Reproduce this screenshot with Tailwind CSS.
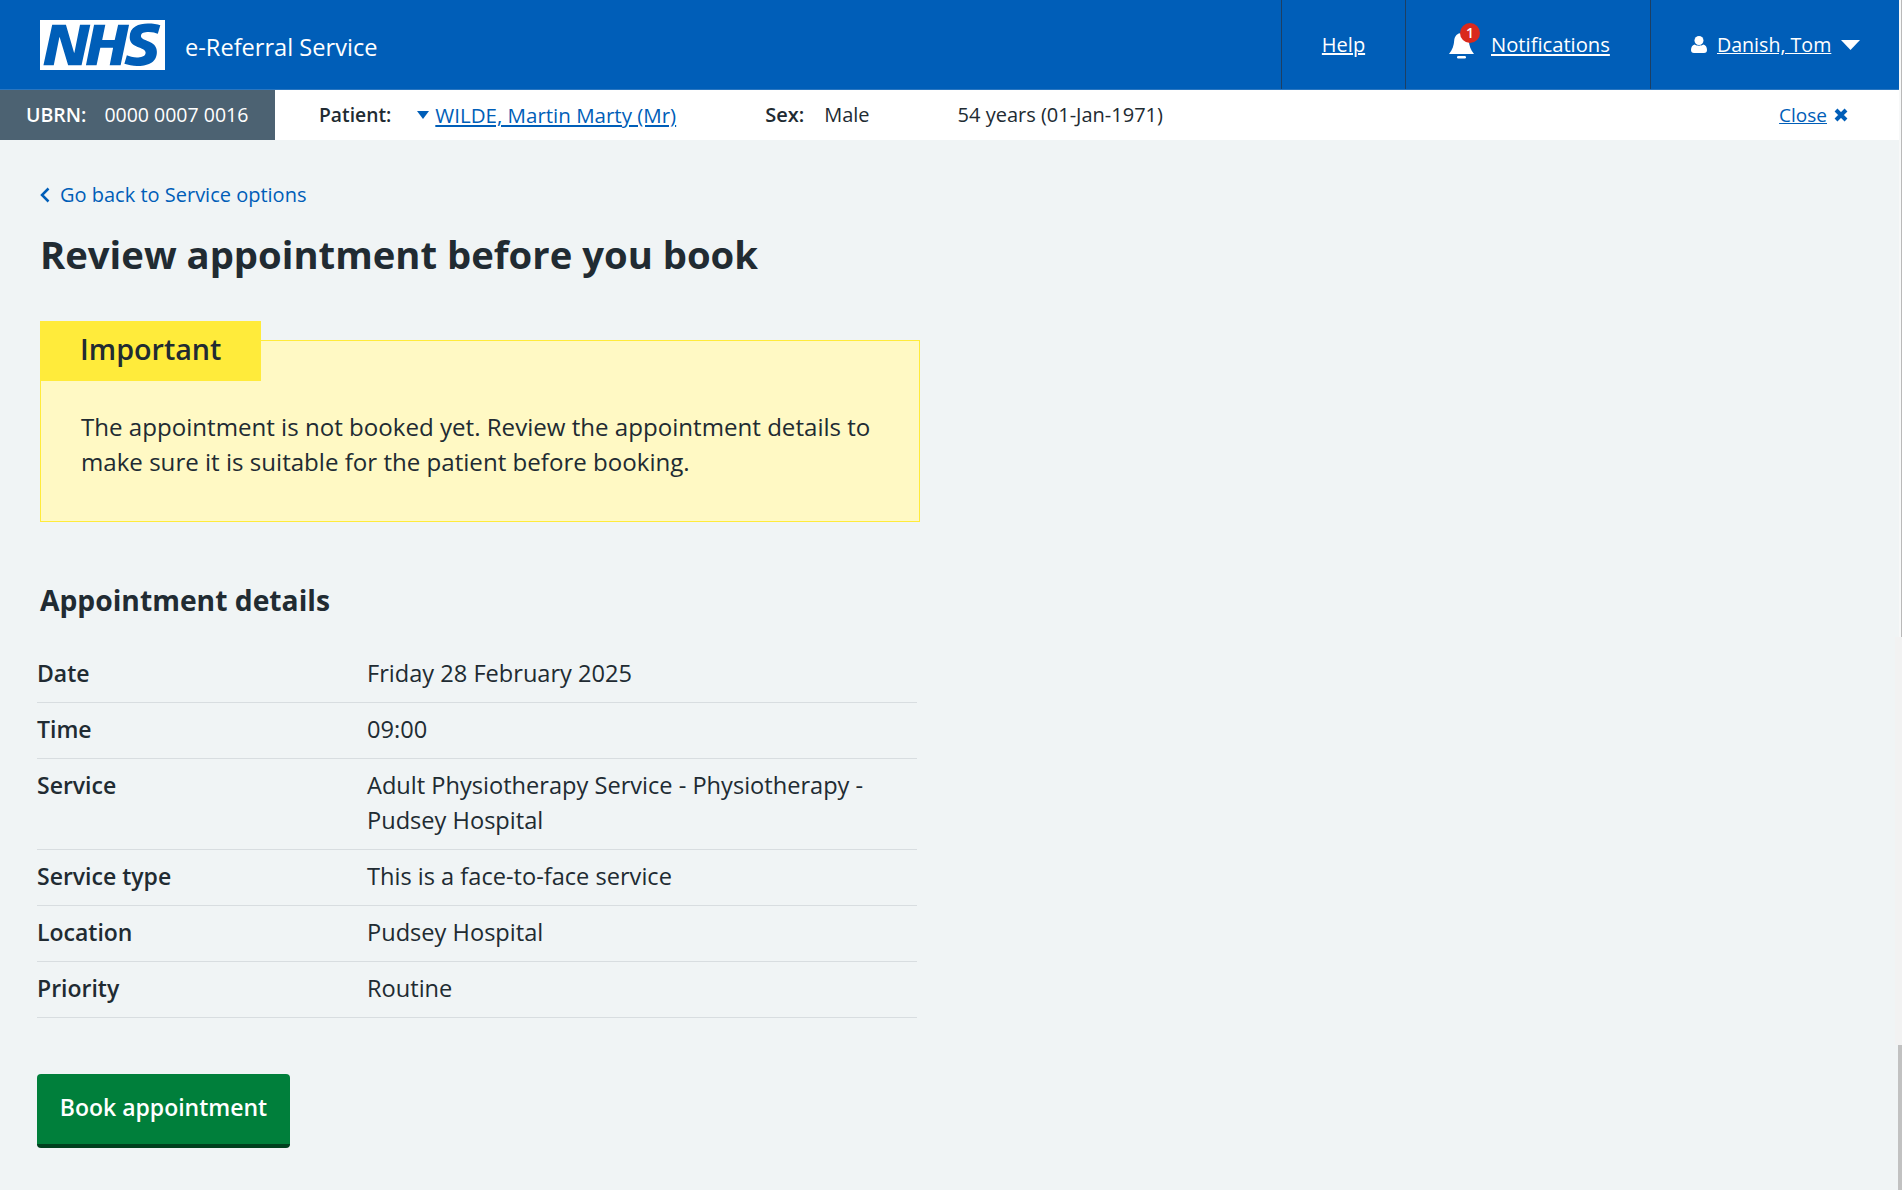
<!DOCTYPE html>
<html lang="en">
<head>
    <meta charset="UTF-8">
    <title>Review appointment before you book</title>
    <script src="https://cdn.jsdelivr.net/npm/@tailwindcss/browser@4"></script>
</head>
<body class="bg-[#f0f4f5] text-[#212b32] font-['Open_Sans',sans-serif] h-[1190px] overflow-hidden">
    <div class="flex h-[1190px]">
        <div class="flex-1 min-w-0">
            <!-- Top header -->
            <header class="flex h-[90px] bg-[#005eb8] border-b border-b-[#2a76c0] text-white">
                <div class="flex-1 flex items-center pl-10">
                    <svg class="w-[125px] h-[50px]" viewBox="0 0 40 16" aria-label="NHS">
                        <path fill="#fff" d="M0 0h40v16H0z"></path>
                        <path fill="#005eb8" d="M3.9 1.5h4.4l2.6 9h.1l1.8-9h3.3l-2.8 13H9l-2.7-9h-.1l-1.8 9H1.1M17.3 1.5h3.6l-1 4.9h4L25 1.5h3.5l-2.7 13h-3.5l1.1-5.6h-4.1l-1.2 5.6h-3.4M37.7 4.4c-.7-.3-1.6-.6-2.9-.6-1.4 0-2.5.2-2.5 1.3 0 1.8 5.1 1.2 5.1 5.1 0 3.6-3.3 4.5-6.4 4.5-1.3 0-2.9-.3-4-.7l.8-2.7c.7.4 2.1.7 3.2.7s2.8-.2 2.8-1.5c0-2.1-5.1-1.3-5.1-5 0-3.4 2.9-4.4 5.8-4.4 1.6 0 3.1.2 4 .6"></path>
                    </svg>
                    <span class="ml-5 mt-[6px] text-[23.6px]">e-Referral Service</span>
                </div>
                <a class="w-[124px] border-l border-[#1d3f63] flex items-center justify-center text-[20px] underline">Help</a>
                <div class="w-[245px] border-l border-[#1d3f63] flex items-center pl-[43px]">
                    <span class="relative w-[25px] h-7 mr-[17px]">
                        <svg class="w-[25px] h-7" viewBox="0 0 25 28" fill="#fff"><path d="M12.5 2c4 0 7 3 7.3 7.5.3 5 1.7 9 5.2 13.5H0c3.500-4.500 4.900-8.500 5.200-13.500C5.500 5 8.500 2 12.500 2z"></path><rect x="8" y="25" width="9" height="2.5" rx="1.2"></rect></svg>
                        <span class="absolute -top-2 left-[11px] w-5 h-5 rounded-full bg-[#da291c] text-[14px] leading-5 text-center font-semibold">1</span>
                    </span>
                    <a class="text-[20.2px] underline">Notifications</a>
                </div>
                <div class="w-[249px] border-l border-[#1d3f63] flex items-center pl-10">
                    <svg class="w-4 h-[17px] mr-[10px]" viewBox="0 0 16 17" fill="#fff"><circle cx="8" cy="4.5" r="4.5"></circle><path d="M0 14c0-3 1.500-5 3.500-5.500 2.500 1.600 6.500 1.600 9 0 2 .5 3.500 2.500 3.500 5.500 0 2-1 3-3 3H3c-2 0-3-1-3-3z"></path></svg>
                    <a class="text-[19.6px] underline">Danish, Tom</a>
                    <svg class="w-[19px] h-[10px] ml-[10px]" viewBox="0 0 19 10" fill="#fff"><path d="M0 0h19L9.5 10z"></path></svg>
                </div>
            </header>

            <!-- Patient bar -->
            <div class="flex items-center h-[50px] bg-white text-[20px]">
                <div class="w-[275px] h-full bg-[#4c6272] text-white flex items-center pl-[26px] text-[19.5px]">
                    <span class="font-semibold mr-[18px]">UBRN:</span><span>0000 0007 0016</span>
                </div>
                <span class="ml-11 text-[19.3px] font-semibold">Patient:</span>
                <svg class="w-3 h-2 ml-[26px] mr-[6px]" viewBox="0 0 12 8" fill="#005eb8"><path d="M0 0h12L6 8z"></path></svg>
                <a class="text-[20.5px] text-[#005eb8] underline">WILDE, Martin Marty (Mr)</a>
                <span class="ml-[89px] font-semibold">Sex:</span>
                <span class="ml-5">Male</span>
                <span class="ml-[88px]">54 years (01-Jan-1971)</span>
                <a class="ml-auto text-[19px] text-[#005eb8] underline">Close</a>
                <svg class="w-[14px] h-[14px] ml-[7px] mr-[51px]" viewBox="0 0 14 14" fill="none" stroke="#005eb8" stroke-width="4"><path d="M2 2l10 10M12 2L2 12"></path></svg>
            </div>

            <!-- Main content -->
            <main class="pl-10">
                <a class="flex items-center mt-[41px] text-[20px] leading-7 text-[#005eb8]">
                    <svg class="w-[10px] h-4 mr-[10px]" viewBox="0 0 10 16" fill="none" stroke="#005eb8" stroke-width="2.5"><path d="M8.5 1.5L2 8l6.5 6.5"></path></svg>
                    Go back to Service options
                </a>
                <h1 class="mt-5 text-[38.25px] leading-[50px] font-bold">Review appointment before you book</h1>

                <div class="relative mt-[61px] w-[880px] h-[182px] bg-[#fff9c4] border border-[#ffeb3b] pt-[68px] pl-10 pr-[30px] text-[24.1px] leading-[35px]">
                    <h3 class="absolute -top-[20px] -left-px w-[221px] h-[60px] bg-[#ffeb3b] pl-10 text-[28.7px] leading-[56px] font-semibold">Important</h3>
                    <p>The appointment is not booked yet. Review the appointment details to make sure it is suitable for the patient before booking.</p>
                </div>

                <h2 class="mt-[60px] text-[28.25px] leading-9 font-bold">Appointment details</h2>

                <dl class="mt-[29px] -ml-[3px] w-[880px] text-[23.6px] leading-[35px]">
                    <div class="flex pt-[9px] pb-[11px] border-b border-[#d8dde0]"><dt class="w-[330px] text-[23px] font-semibold">Date</dt><dd>Friday 28 February 2025</dd></div>
                    <div class="flex pt-[9px] pb-[11px] border-b border-[#d8dde0]"><dt class="w-[330px] text-[23px] font-semibold">Time</dt><dd>09:00</dd></div>
                    <div class="flex pt-[9px] pb-[11px] border-b border-[#d8dde0]"><dt class="w-[330px] text-[23px] font-semibold">Service</dt><dd class="flex-1">Adult Physiotherapy Service - Physiotherapy - Pudsey Hospital</dd></div>
                    <div class="flex pt-[9px] pb-[11px] border-b border-[#d8dde0]"><dt class="w-[330px] text-[23px] font-semibold">Service type</dt><dd>This is a face-to-face service</dd></div>
                    <div class="flex pt-[9px] pb-[11px] border-b border-[#d8dde0]"><dt class="w-[330px] text-[23px] font-semibold">Location</dt><dd>Pudsey Hospital</dd></div>
                    <div class="flex pt-[9px] pb-[11px] border-b border-[#d8dde0]"><dt class="w-[330px] text-[23px] font-semibold">Priority</dt><dd>Routine</dd></div>
                </dl>

                <button class="block mt-14 -ml-[3px] w-[253px] h-[74px] pb-1 rounded bg-[#007f3b] border-b-4 border-[#00401e] text-white text-[23px] font-semibold">Book appointment</button>
            </main>
        </div>
        <!-- Scrollbars: inner one at the top, page one below -->
        <div class="w-[3px] h-full flex flex-col">
            <div class="h-[637px] bg-[#f7f8f8] border-r border-[#b9b9b9]"></div>
            <div class="h-[408px] -ml-1 w-[7px] bg-[#f2f2f2]"></div>
            <div class="h-[145px] -ml-px w-1 bg-[#c1c1c1]"></div>
        </div>
    </div>
</body>
</html>
